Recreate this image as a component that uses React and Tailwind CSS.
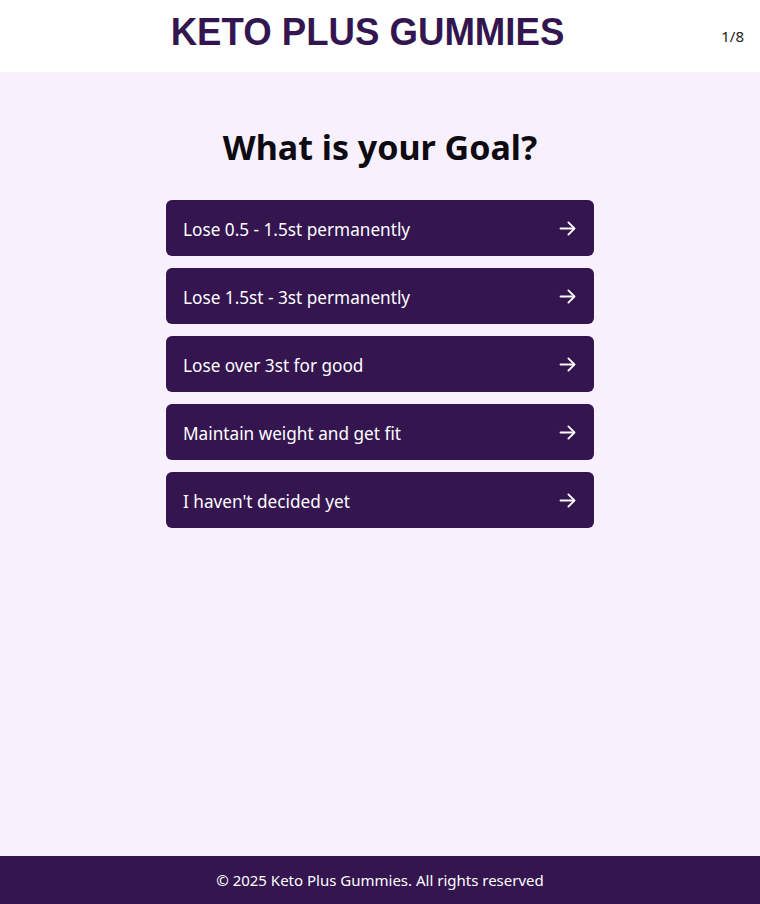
import React from "react";

const options = [
  "Lose 0.5 - 1.5st permanently",
  "Lose 1.5st - 3st permanently",
  "Lose over 3st for good",
  "Maintain weight and get fit",
  "I haven't decided yet",
];

function Arrow() {
  return (
    <svg width="21" height="21" viewBox="0 0 24 24" fill="none" stroke="currentColor" strokeWidth="2.1" strokeLinecap="round" strokeLinejoin="round">
      <path d="M4 12h15" />
      <path d="M13 5l7 7-7 7" />
    </svg>
  );
}

export default function App() {
  return (
    <div className="min-h-screen flex flex-col bg-[#f8f0fd] font-['Noto_Sans',sans-serif]">
      <header className="h-[72px] bg-white flex items-start justify-center relative">
        <span className="mt-[13px] mr-[25px] font-['Liberation_Sans',Arial,sans-serif] font-bold text-[36.6px] leading-[38px] text-[#33164f] scale-y-[1.07]">
          KETO PLUS GUMMIES
        </span>
        <span className="absolute right-4 top-[26px] text-[15px] leading-5 text-[#222]">1/8</span>
      </header>
      <main className="flex-1 flex flex-col items-center pt-[54px]">
        <h1 className="text-[34px] font-bold leading-[42px] text-[#0d0a12]">What is your Goal?</h1>
        <div className="mt-[32px] w-[428px] flex flex-col gap-3">
          {options.map((o) => (
            <button
              key={o}
              className="h-14 rounded-md bg-[#34154f] text-white flex items-center justify-between pl-[17px] pr-[16px] text-[17.2px] text-left"
            >
              <span className="pt-[3px]">{o}</span>
              <Arrow />
            </button>
          ))}
        </div>
      </main>
      <footer className="h-12 bg-[#34154f] text-white flex items-center justify-center text-[15px]">
        © 2025 Keto Plus Gummies. All rights reserved
      </footer>
    </div>
  );
}
